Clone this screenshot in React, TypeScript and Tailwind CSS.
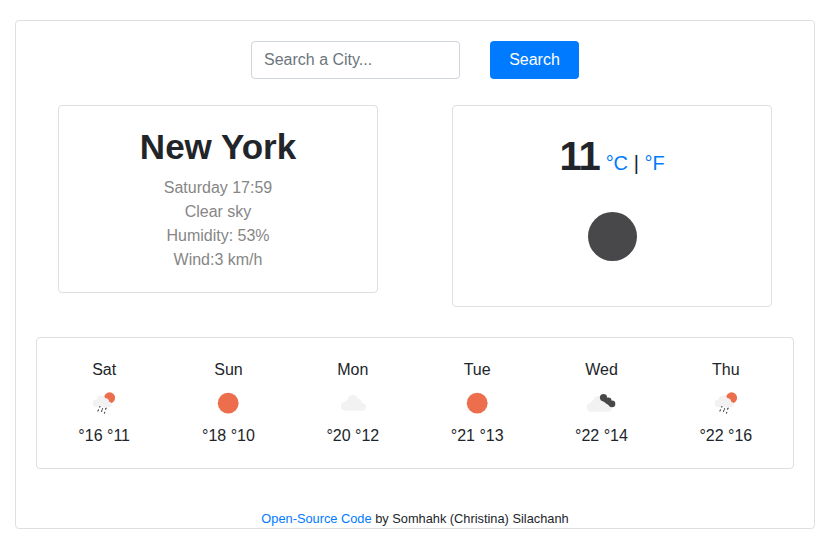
import React from "react";

type Condition = "rain" | "sun" | "cloud" | "broken";

const CLOUD =
  "M14.3 25.8a4.6 4.6 0 0 1-.2-9.2 3 3 0 0 1 2.4-2.4 5.2 5.2 0 0 1 10.1-.4 4 4 0 0 1 4 4.4 3.8 3.8 0 0 1 .8 7.6z";

function WeatherIcon({ kind }: { kind: Condition }) {
  return (
    <svg width="50" height="35" viewBox="0 0 50 35">
      {kind === "sun" && <circle cx="25.2" cy="18.2" r="10.4" fill="#ec6e4c" />}
      {kind === "cloud" && (
        <path d={CLOUD} fill="#f2f2f2" transform="translate(3.3 0)" />
      )}
      {kind === "broken" && (
        <>
          <path d={CLOUD} fill="#f2f2f2" transform="translate(1 1)" />
          <g fill="#48484a">
            <circle cx="27.5" cy="12.6" r="3.6" />
            <circle cx="32.4" cy="15.7" r="3.1" />
            <circle cx="36" cy="18.9" r="3.3" />
            <path d="M28 10l7 6-2 4.5-7-5z" />
          </g>
        </>
      )}
      {kind === "rain" && (
        <>
          <circle cx="30.6" cy="12.8" r="5.5" fill="#ec6e4c" />
          <path
            d="M17.8 22.3a3.9 3.9 0 0 1-.3-7.8 4.7 4.7 0 0 1 9-1.2 3.3 3.3 0 0 1 3.7 3.5 2.9 2.9 0 0 1 1.1 5.5z"
            fill="#f2f2f2"
          />
          <g stroke="#48484a" strokeWidth="1.2" strokeLinecap="round">
            <path d="M20.9 21.6l-.2.4M19.4 24.9l-.5 1M23.6 23.7l-.3.6M22.8 25.6l-.3.8M27.2 23.2l-.7 1M25.7 27.4l-.3.7" />
          </g>
        </>
      )}
    </svg>
  );
}

const forecast: { day: string; kind: Condition; high: number; low: number }[] = [
  { day: "Sat", kind: "rain", high: 16, low: 11 },
  { day: "Sun", kind: "sun", high: 18, low: 10 },
  { day: "Mon", kind: "cloud", high: 20, low: 12 },
  { day: "Tue", kind: "sun", high: 21, low: 13 },
  { day: "Wed", kind: "broken", high: 22, low: 14 },
  { day: "Thu", kind: "rain", high: 22, low: 16 },
];

export default function App() {
  return (
    <div className="h-[549px] bg-white pt-5 pl-[15px] font-['Liberation_Sans',Arial,sans-serif] text-base leading-6 text-[#212529]">
      <main className="flex h-[509px] w-[800px] flex-col rounded border border-[#dfdfdf] px-5 pt-5">
        <form className="flex h-[38px] gap-[30px] pl-[215px]" onSubmit={(e) => e.preventDefault()}>
          <input
            type="text"
            placeholder="Search a City..."
            className="w-[209px] rounded border border-[#ced4da] px-3 placeholder:text-[#6c757d] placeholder:opacity-100"
          />
          <button type="submit" className="w-[89px] rounded bg-[#007bff] text-white">
            Search
          </button>
        </form>

        <div className="mt-[26px] flex items-start gap-[74px] pl-[22px]">
          <section className="h-[188px] w-80 rounded border border-[#dfdfdf] pt-5 text-center">
            <h1 className="text-[35px] leading-[42px] font-bold">New York</h1>
            <ul className="mt-2 text-[#868686]">
              <li>Saturday 17:59</li>
              <li>Clear sky</li>
              <li>Humidity: 53%</li>
              <li>Wind:3 km/h</li>
            </ul>
          </section>
          <section className="flex h-[202px] w-80 flex-col items-center rounded border border-[#dfdfdf] pt-5">
            <div className="flex h-[60px] items-baseline text-xl leading-[60px] whitespace-pre">
              <strong className="text-[40px] font-bold tracking-[-0.8px]">11</strong>
              <span> </span>
              <a href="#" className="text-[#007bff]">°C</a>
              <span> | </span>
              <a href="#" className="text-[#007bff]">°F</a>
            </div>
            <div className="mt-[26px] h-[49px] w-[49px] rounded-full bg-[#48484a]" />
          </section>
        </div>

        <section className="mt-[30px] grid h-[132px] w-[758px] grid-cols-6 rounded border border-[#dfdfdf] px-[5px] pt-5">
          {forecast.map((f) => (
            <div key={f.day} className="flex flex-col items-center">
              <div>{f.day}</div>
              <div className="mt-[3px] h-[39px]">
                <WeatherIcon kind={f.kind} />
              </div>
              <div>
                °{f.high} °{f.low}
              </div>
            </div>
          ))}
        </section>

        <footer className="mt-10 text-center text-[12.8px] leading-[19px]">
          <a href="#" className="text-[#007bff]">Open-Source Code</a> by Somhahk (Christina) Silachanh
        </footer>
      </main>
    </div>
  );
}
